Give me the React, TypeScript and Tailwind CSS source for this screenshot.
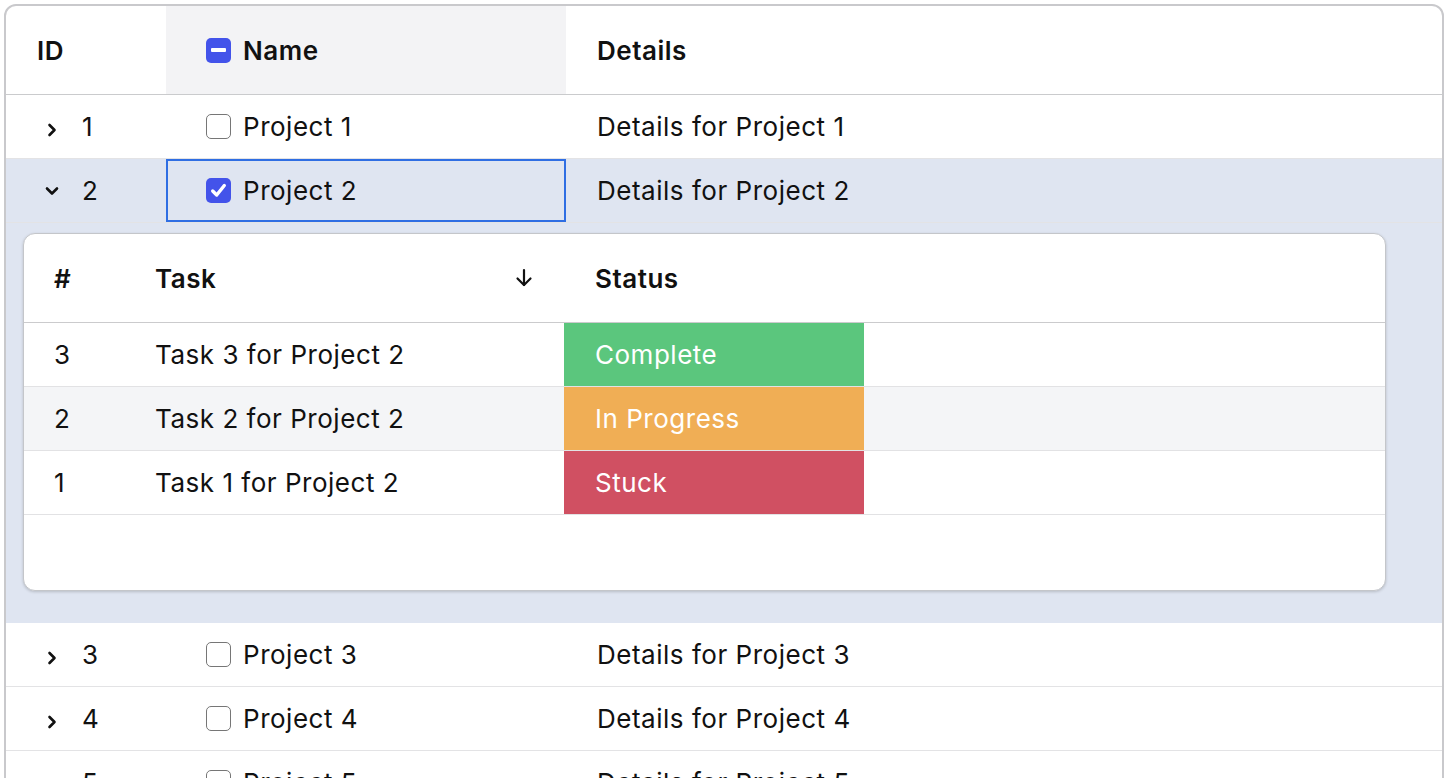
import React from 'react';

const font = "font-['Inter','Noto_Sans',sans-serif]";

// Tasks shown inside the expanded project row
const TASKS = [
    { id: 3, name: 'Task 3 for Project 2', status: 'Complete', color: 'bg-[#5bc67d]' },
    { id: 2, name: 'Task 2 for Project 2', status: 'In Progress', color: 'bg-[#f0ae55]' },
    { id: 1, name: 'Task 1 for Project 2', status: 'Stuck', color: 'bg-[#d05062]' },
];

const PROJECTS = [1, 2, 3, 4, 5, 6, 7];

const Checkbox: React.FC<{ state: 'on' | 'off' | 'mixed' }> = ({ state }) => {
    if (state === 'off') {
        return <span className="w-[25px] h-[25px] shrink-0 rounded-[5px] border-[1.5px] border-[#767676] bg-white" />;
    }
    return (
        <span className="w-[25px] h-[25px] shrink-0 rounded-[5px] bg-[#4353ea] flex items-center justify-center">
            {state === 'mixed' ? (
                <span className="w-[15px] h-[4px] rounded-[1px] bg-white" />
            ) : (
                <svg width="19" height="19" viewBox="0 0 18 18" fill="none">
                    <path d="M3.5 9.5 L7.3 13.3 L14.5 4.3" stroke="white" strokeWidth="3.2" strokeLinecap="round" strokeLinejoin="round" />
                </svg>
            )}
        </span>
    );
};

const Chevron: React.FC<{ open: boolean }> = ({ open }) => (
    <span className={`w-4 h-4 flex items-center justify-center ${open ? 'rotate-90' : 'translate-y-[3px]'}`}>
        <svg width="16" height="16" viewBox="0 0 16 16" fill="none">
            <path d="M5.5 3 L10.5 8 L5.5 13" stroke="#111" strokeWidth="2.6" strokeLinecap="round" strokeLinejoin="round" />
        </svg>
    </span>
);

const SubTable: React.FC = () => (
    <div className="w-[1363px] rounded-xl border border-[#c4c6ca] bg-white shadow-[0_1px_3px_rgba(0,0,0,0.18)] overflow-hidden">
        {/* Header */}
        <div className="flex h-[89px] border-b border-[#cbcbcd] items-center font-semibold">
            <div className="w-[100px] pl-[30px]">#</div>
            <div className="w-[440px] pl-[31px] pr-7 flex items-center justify-between">
                <span>Task</span>
                <svg width="24" height="24" viewBox="0 0 24 24" fill="none" stroke="#111" strokeWidth="2.2" strokeLinecap="round" strokeLinejoin="round">
                    <path d="M12 4v15" />
                    <path d="m18.5 12.5-6.5 6.5-6.5-6.5" />
                </svg>
            </div>
            <div className="w-[300px] pl-[31px]">Status</div>
        </div>
        {/* Rows */}
        {TASKS.map((t, i) => (
            <div key={t.id} className={`flex h-[64px] border-b border-[#e2e2e4] ${i === 1 ? 'bg-[#f4f5f7]' : 'bg-white'}`}>
                <div className="w-[100px] pl-[30px] flex items-center">{t.id}</div>
                <div className="w-[440px] pl-[31px] flex items-center">{t.name}</div>
                <div className={`w-[300px] pl-[31px] flex items-center text-white ${t.color}`}>{t.status}</div>
            </div>
        ))}
        <div className="h-[75px]" />
    </div>
);

export default function App() {
    return (
        <div className={`${font} text-[26px] tracking-[0.02em] text-[#111] bg-white p-1`}>
            <div className="rounded-xl border-2 border-[#c9c9cc] overflow-hidden bg-white">
                {/* Main header */}
                <div className="flex h-[89px] border-b border-[#cacbcd] font-semibold">
                    <div className="w-[160px] pl-[31px] flex items-center">ID</div>
                    <div className="w-[400px] pl-10 flex items-center gap-3 bg-[#f3f3f5]">
                        <Checkbox state="mixed" />
                        <span>Name</span>
                    </div>
                    <div className="flex-1 pl-[31px] flex items-center">Details</div>
                </div>

                {PROJECTS.map((p) => {
                    const open = p === 2;
                    return (
                        <React.Fragment key={p}>
                            <div className={`flex h-[64px] border-b border-[#e3e3e5] ${open ? 'bg-[#dfe5f1]' : 'bg-white'}`}>
                                <div className="w-[160px] pl-[38px] flex items-center gap-[22px]">
                                    <Chevron open={open} />
                                    <span>{p}</span>
                                </div>
                                <div className={`w-[400px] pl-10 flex items-center gap-3 ${open ? 'outline-2 -outline-offset-2 outline-[#2f6ee3]' : ''}`}>
                                    <Checkbox state={open ? 'on' : 'off'} />
                                    <span>Project {p}</span>
                                </div>
                                <div className="flex-1 pl-[31px] flex items-center">Details for Project {p}</div>
                            </div>
                            {open && (
                                <div className="bg-[#dfe5f1] pl-[17px] pt-[10px] pb-8">
                                    <SubTable />
                                </div>
                            )}
                        </React.Fragment>
                    );
                })}
            </div>
        </div>
    );
}
